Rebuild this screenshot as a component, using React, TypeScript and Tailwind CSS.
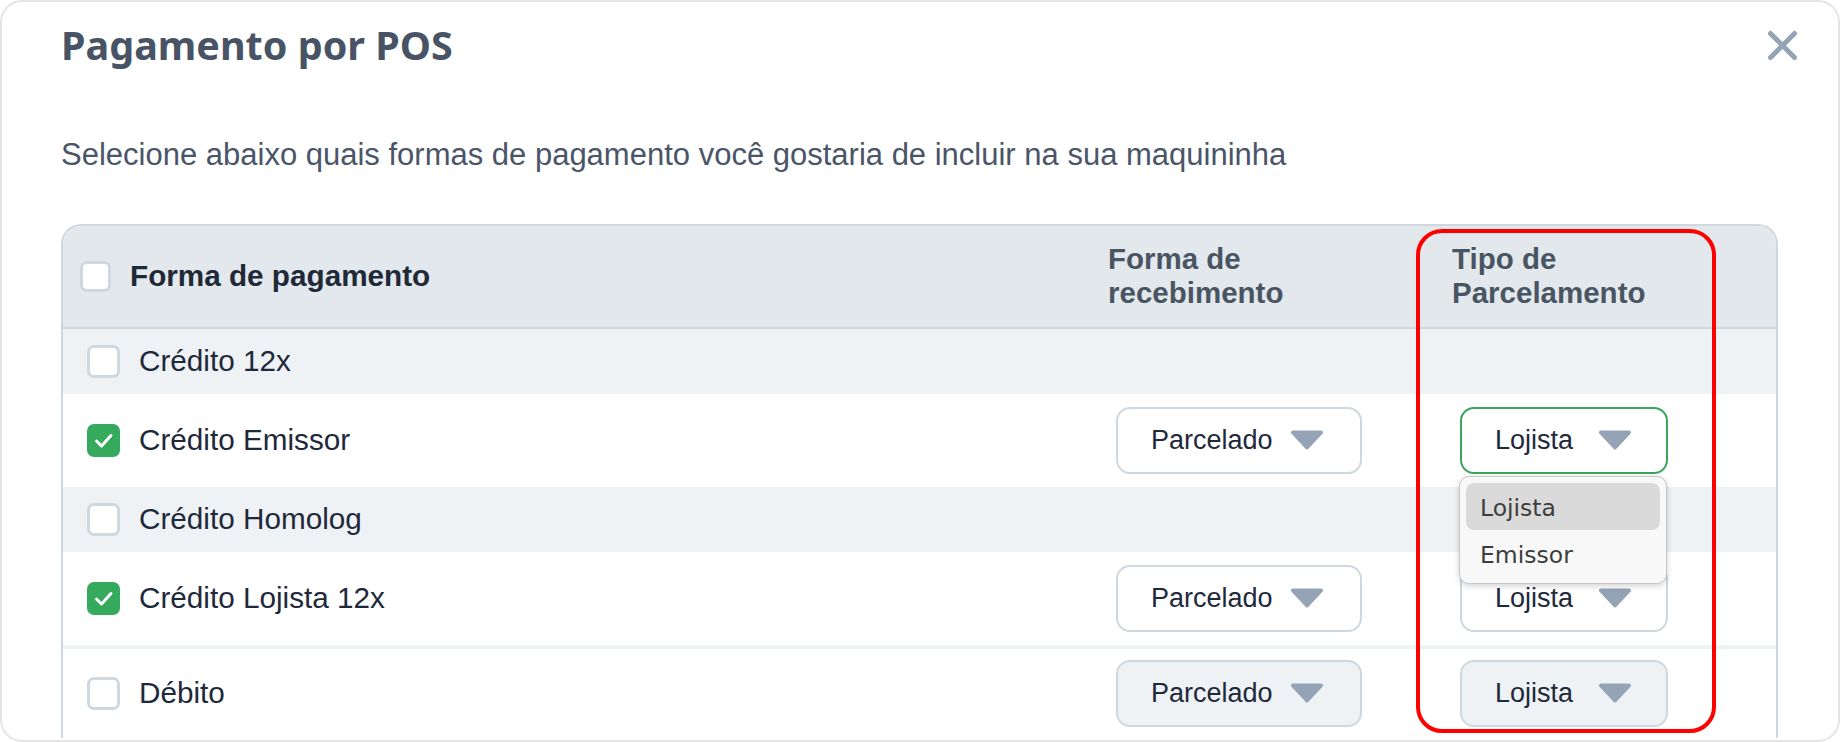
import React from "react";

type Row = {
  label: string;
  checked: boolean;
  shaded: boolean;
  selects?: { recebimento: string; parcelamento: string; disabled?: boolean; focused?: boolean };
  separatorTop?: boolean;
};

const ROWS: Row[] = [
  { label: "Crédito 12x", checked: false, shaded: true },
  {
    label: "Crédito Emissor",
    checked: true,
    shaded: false,
    selects: { recebimento: "Parcelado", parcelamento: "Lojista", focused: true },
  },
  { label: "Crédito Homolog", checked: false, shaded: true },
  {
    label: "Crédito Lojista 12x",
    checked: true,
    shaded: false,
    selects: { recebimento: "Parcelado", parcelamento: "Lojista" },
  },
  {
    label: "Débito",
    checked: false,
    shaded: false,
    separatorTop: true,
    selects: { recebimento: "Parcelado", parcelamento: "Lojista", disabled: true },
  },
];

function Checkbox({ checked, size = "row" }: { checked: boolean; size?: "row" | "head" }) {
  const dims = size === "head" ? "h-[31px] w-[31px]" : "h-[33px] w-[33px]";
  if (checked) {
    return (
      <span className={`flex ${dims} shrink-0 items-center justify-center rounded-[7px] bg-[#35a95c]`}>
        <svg width="33" height="33" viewBox="0 0 33 33" fill="none">
          <polyline
            points="9.5,17 14.5,22 24,11.5"
            stroke="#ffffff"
            strokeWidth="3"
            strokeLinecap="round"
            strokeLinejoin="round"
          />
        </svg>
      </span>
    );
  }
  return (
    <span
      className={`block ${dims} shrink-0 rounded-[7px] border-[3px] border-[#cfd8df] bg-white`}
    />
  );
}

function Caret() {
  return (
    <svg width="34" height="20" viewBox="0 0 34 20" className="shrink-0">
      <path
        d="M3 2.5 L31 2.5 L17 17.5 Z"
        fill="#94a3b5"
        stroke="#94a3b5"
        strokeWidth="4"
        strokeLinejoin="round"
      />
    </svg>
  );
}

function Select({
  value,
  width,
  disabled,
  focused,
}: {
  value: string;
  width: "wide" | "narrow";
  disabled?: boolean;
  focused?: boolean;
}) {
  const w = width === "wide" ? "w-[246px] pr-[36px]" : "w-[208px] pr-[34px]";
  const border = focused ? "border-[#3aa65b]" : "border-[#cfd8df]";
  const bg = disabled ? "bg-[#eef2f5]" : "bg-white";
  return (
    <div
      className={`flex h-[67px] ${w} items-center rounded-[14px] border-2 ${border} ${bg} pl-[33px] text-[27px] text-[#1e293b]`}
    >
      <span className="leading-none">{value}</span>
      <span className="ml-auto">
        <Caret />
      </span>
    </div>
  );
}

export default function App() {
  return (
    <div
      className="relative h-[742px] w-[1840px] overflow-hidden bg-white"
      style={{ fontFamily: '"Liberation Sans", Arial, sans-serif' }}
    >
      <div className="relative h-[742px] w-[1840px] overflow-hidden rounded-[22px] border-2 border-[#e5e5e5] bg-white">
        {/* header */}
        <div className="flex items-center justify-between pl-[59px] pr-[40px] pt-[24px]">
          <h1
            className="text-[39.5px] font-bold leading-none text-[#485466]"
            style={{ fontFamily: '"Noto Sans", sans-serif' }}
          >
            Pagamento por POS
          </h1>
          <button type="button" aria-label="fechar" className="flex h-[31px] w-[31px] items-center justify-center">
            <svg width="31" height="31" viewBox="0 0 31 31">
              <line x1="3.5" y1="3.5" x2="27.5" y2="27.5" stroke="#94a3b5" strokeWidth="5" strokeLinecap="round" />
              <line x1="27.5" y1="3.5" x2="3.5" y2="27.5" stroke="#94a3b5" strokeWidth="5" strokeLinecap="round" />
            </svg>
          </button>
        </div>

        <p className="mt-[73px] pl-[59px] text-[31px] leading-none text-[#4a5568]">
          Selecione abaixo quais formas de pagamento você gostaria de incluir na sua maquininha
        </p>

        {/* table */}
        <div className="ml-[59px] mt-[54px] w-[1717px] rounded-t-[20px] border-x-2 border-t-2 border-[#cfd8df]">
          <div className="grid h-[103px] grid-cols-[1037px_336px_1fr] items-center rounded-t-[18px] border-b-2 border-[#cfd8df] bg-[#e2e8ec] font-bold">
            <div className="flex items-center gap-[19px] pl-[17px]">
              <Checkbox checked={false} size="head" />
              <span className="text-[29.7px] leading-none text-[#1f2937]">Forma de pagamento</span>
            </div>
            <div className="pl-[8px] text-[29.5px] leading-[34px] text-[#4a5563]">
              Forma de
              <br />
              recebimento
            </div>
            <div className="pl-[16px] text-[29.5px] leading-[34px] text-[#4a5563]">
              Tipo de
              <br />
              Parcelamento
            </div>
          </div>

          {ROWS.map((row) => (
            <div
              key={row.label}
              className={`grid grid-cols-[1037px_336px_1fr] items-center ${
                row.shaded ? "bg-[#eef2f5]" : "bg-white"
              } ${row.selects ? "h-[93px]" : "h-[65px]"} ${row.separatorTop ? "border-t-4 border-[#eef2f5]" : ""}`}
            >
              <div className="flex items-center gap-[19px] pl-[24px]">
                <Checkbox checked={row.checked} />
                <span className="text-[29.7px] leading-none text-[#1e293b]">{row.label}</span>
              </div>
              <div className="pl-[16px]">
                {row.selects ? (
                  <Select value={row.selects.recebimento} width="wide" disabled={row.selects.disabled} />
                ) : null}
              </div>
              <div className="pl-[24px]">
                {row.selects ? (
                  <Select
                    value={row.selects.parcelamento}
                    width="narrow"
                    disabled={row.selects.disabled}
                    focused={row.selects.focused}
                  />
                ) : null}
              </div>
            </div>
          ))}
        </div>

        {/* open native select list */}
        <div
          className="absolute left-[1457px] top-[474px] w-[208px] rounded-[10px] border border-[#c6c6c6] bg-[#f8f8f8] p-[6px] text-[23.5px] text-[#3d3d3d] shadow-[0_2px_6px_rgba(0,0,0,0.18)]"
          style={{ fontFamily: '"DejaVu Sans", sans-serif' }}
        >
          <div className="flex h-[47px] items-center rounded-[8px] bg-[#dadada] pl-[14px] pt-[4px]">Lojista</div>
          <div className="flex h-[47px] items-center pl-[14px] pt-[4px]">Emissor</div>
        </div>

        {/* annotation */}
        <div className="pointer-events-none absolute left-[1414px] top-[227px] h-[504px] w-[300px] rounded-[26px] border-4 border-[#ff0000]" />
      </div>
    </div>
  );
}
